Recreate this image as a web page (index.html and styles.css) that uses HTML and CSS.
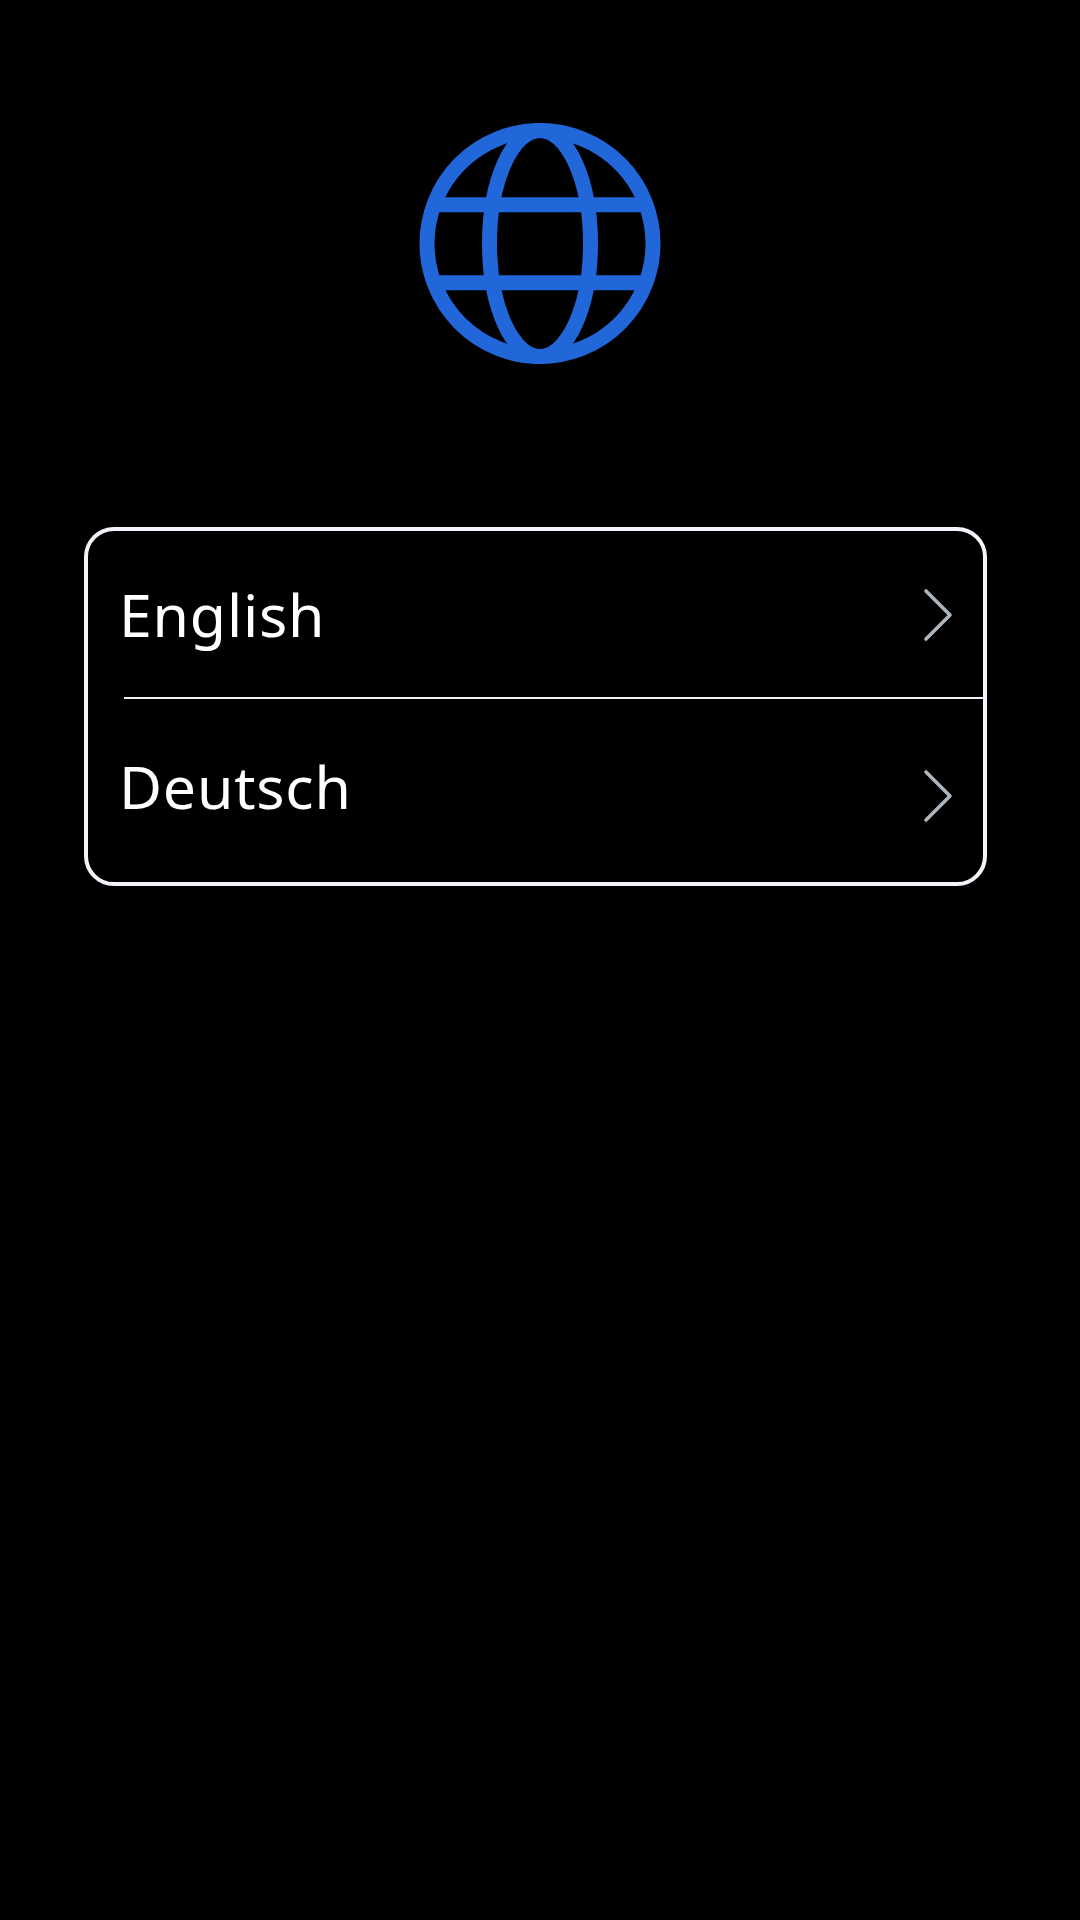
FILE: index.html
```html
<!DOCTYPE html>
<html lang="en">
<head>
<meta charset="utf-8">
<title>Language</title>
<link rel="stylesheet" href="styles.css">
</head>
<body>
<main class="screen">
  <svg class="globe" viewBox="0 0 242 242" fill="none" stroke="currentColor" stroke-width="15">
    <circle cx="121" cy="120.5" r="113"/>
    <ellipse cx="121" cy="120.5" rx="50.5" ry="113"/>
    <path d="M17 81.7H225M17 159.8H225"/>
  </svg>
  <nav class="languages">
    <a class="language language-first">
      <span class="name">English</span>
      <svg class="chevron" viewBox="0 0 28 54"><path d="M3 3L27 27L3 51"/></svg>
    </a>
    <a class="language language-last">
      <span class="name">Deutsch</span>
      <svg class="chevron" viewBox="0 0 28 54"><path d="M3 3L27 27L3 51"/></svg>
    </a>
  </nav>
</main>
</body>
</html>
```
FILE: styles.css
```css
* {
  box-sizing: border-box;
}

body {
  margin: 0;
  background: #000;
  color: #fff;
  font-family: "Noto Sans", sans-serif;
}

.screen {
  display: flex;
  flex-direction: column;
  min-height: 1920px;
  padding: 123px 93px 0 84px;
}

.globe {
  width: 242px;
  height: 242px;
  margin-left: 335px;
  color: #2267d9;
}

.languages {
  margin-top: 162px;
  border: 4px solid #f3f3f9;
  border-radius: 30px;
}

.language {
  display: flex;
  justify-content: space-between;
  align-items: flex-start;
  margin-left: 36px;
  padding-right: 32px;
}

.language-first {
  height: 168px;
  padding-top: 42px;
  border-bottom: 2px solid #f3f3f9;
}

.language-last {
  height: 183px;
  padding-top: 46px;
}

.name {
  margin-left: -5px;
  font-size: 59px;
  line-height: 82px;
  letter-spacing: 0.8px;
}

.chevron {
  width: 28px;
  height: 54px;
  margin-top: 15px;
  overflow: visible;
  fill: none;
  stroke: #adb5bd;
  stroke-width: 3.6;
  stroke-linecap: round;
  stroke-linejoin: round;
}

.language-last .chevron {
  margin-top: 24px;
}
```
